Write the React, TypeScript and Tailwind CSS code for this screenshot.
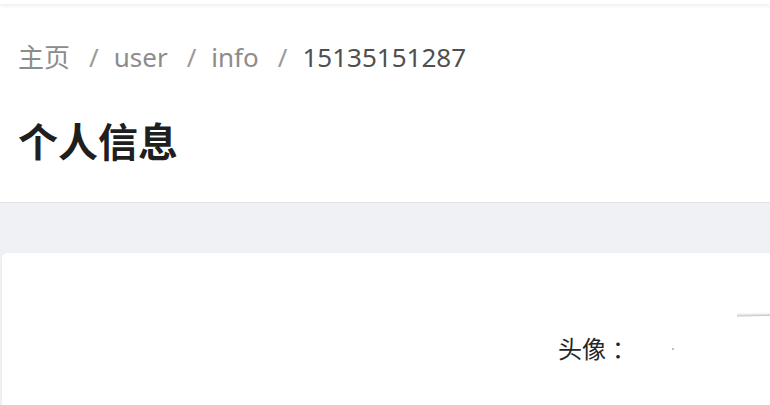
import React from 'react';

const crumbs = ['主页', 'user', 'info'];

export default function App() {
  return (
    <div className="h-[405px] w-[770px] overflow-hidden bg-[#f0f1f5]" style={{ fontFamily: '"Noto Sans", "Noto Sans CJK SC", sans-serif' }}>
      <div className="relative z-10 h-[4px] bg-white shadow-[0_1px_5px_rgba(0,0,0,0.1)]" />
      <header className="h-[199px] border-b border-[#e3e3e3] bg-white px-[18px] pt-[31px]">
        <nav className="flex items-center text-[26px] leading-[44px] text-[#8c8c8c]">
          {crumbs.map((c) => (
            <span key={c} className="flex items-center">
              <span>{c}</span>
              <span className="pl-[19px] pr-[15px] text-[#9a9a9a]">/</span>
            </span>
          ))}
          <span className="text-[#4f4f4f]">15135151287</span>
        </nav>
        <h1 className="mt-[36px] text-[40px] font-bold leading-[54px] text-[#1f1f1f]">个人信息</h1>
      </header>
      <div className="pt-[49px]">
        <div className="relative ml-[1px] h-[200px] rounded-tl-[6px] border-l border-t border-[#eceef2] bg-white">
          <div className="flex items-center pl-[556px] pt-[80px] text-[24px] leading-[32px] text-[#262626]">
            <span>
              头像<span className="pl-[6px]">：</span>
            </span>
            <span className="ml-[36px] h-[2px] w-[2px] rounded-full bg-[#aaa]" />
          </div>
          {/* avatar, mostly off-screen on the right */}
          <div className="absolute left-[735px] top-[58px] h-[14px] w-[40px] overflow-hidden">
            <div className="absolute left-[-1170px] top-[5px] h-[2400px] w-[2400px] rounded-full bg-white shadow-[0_-1px_3px_rgba(0,0,0,0.32)]" />
          </div>
        </div>
      </div>
    </div>
  );
}
